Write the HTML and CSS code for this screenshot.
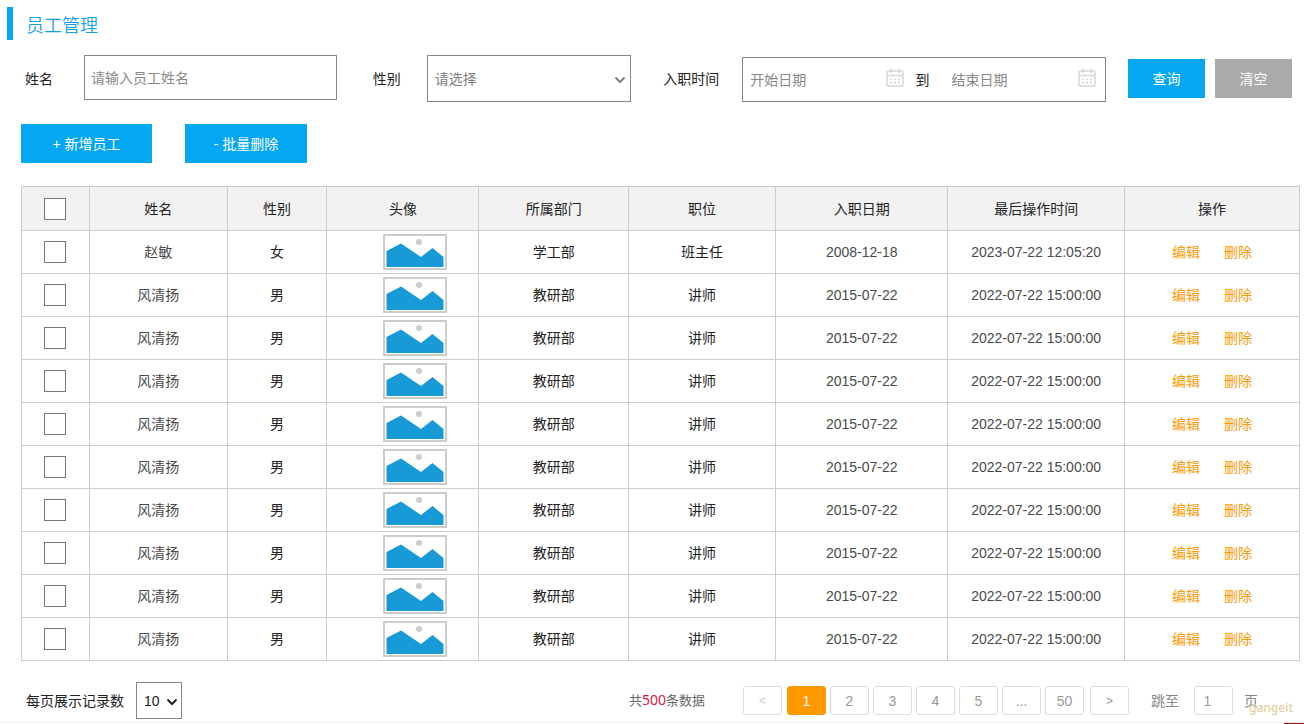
FILE: index.html
```
<!DOCTYPE html>
<html lang="zh-CN">
<head>
<meta charset="utf-8">
<meta name="viewport" content="width=device-width, initial-scale=1">
<title>员工管理</title>
<link rel="stylesheet" href="styles.css">
</head>
<body>
<svg class="sprite" aria-hidden="true">
  <symbol id="photo" viewBox="0 0 64 36">
    <rect x="1" y="1" width="62" height="34" fill="#fff" stroke="#ccc" stroke-width="2"/>
    <circle cx="36" cy="8" r="3" fill="#ccc"/>
    <path d="M3.500 17L18 9.500L38 23L49.500 14L60.500 23V33H3.500Z" fill="#189ad6"/>
  </symbol>
  <symbol id="calendar" viewBox="0 0 18 19">
    <rect x="1" y="3" width="16" height="15" rx="1" fill="none" stroke="#d3d6da" stroke-width="1.500"/>
    <path d="M1 7.500H17M5 0.500V5M13 0.500V5" fill="none" stroke="#d3d6da" stroke-width="1.500"/>
    <path d="M4 11.500H6M8 11.500H10M12 11.500H14M4 14.500H6M8 14.500H10M12 14.500H14" stroke="#d3d6da" stroke-width="1.500"/>
  </symbol>
  <symbol id="chevron" viewBox="0 0 12 8">
    <path d="M1.500 1.500L6 6L10.500 1.500" fill="none" stroke="currentColor" stroke-width="2"/>
  </symbol>
</svg>

<h1 class="page-title">员工管理</h1>

<form class="filters">
  <label class="filter-label" for="name">姓名</label>
  <input class="box name-input" id="name" type="text" placeholder="请输入员工姓名">
  <label class="filter-label" for="gender">性别</label>
  <span class="select-wrap gender-wrap">
    <select class="box" id="gender"><option>请选择</option><option>男</option><option>女</option></select>
    <svg class="chevron"><use href="#chevron"/></svg>
  </span>
  <label class="filter-label" for="start">入职时间</label>
  <div class="box date-range">
    <input class="date-input" id="start" type="text" placeholder="开始日期">
    <svg class="calendar"><use href="#calendar"/></svg>
    <label class="date-to" for="end">到</label>
    <input class="date-input" id="end" type="text" placeholder="结束日期">
    <svg class="calendar"><use href="#calendar"/></svg>
  </div>
  <div class="filter-buttons">
    <button class="btn btn-small" type="button">查询</button>
    <button class="btn btn-small btn-grey" type="button">清空</button>
  </div>
</form>

<div class="actions">
  <button class="btn btn-add" type="button">+ 新增员工</button>
  <button class="btn btn-delete" type="button">- 批量删除</button>
</div>

<div class="table-wrap">
<table class="staff">
  <colgroup>
    <col class="c-check"><col class="c-name"><col class="c-gender"><col class="c-photo"><col class="c-dept"><col class="c-job"><col class="c-date"><col class="c-time"><col class="c-ops">
  </colgroup>
  <thead>
    <tr><th><input class="check" type="checkbox" aria-label="全选"></th><th>姓名</th><th>性别</th><th>头像</th><th>所属部门</th><th>职位</th><th>入职日期</th><th>最后操作时间</th><th>操作</th></tr>
  </thead>
  <tbody>
    <tr><td><input class="check" type="checkbox" aria-label="选择"></td><td class="soft">赵敏</td><td>女</td><td class="photo-cell"><svg class="photo"><use href="#photo"/></svg></td><td>学工部</td><td>班主任</td><td class="soft">2008-12-18</td><td class="soft">2023-07-22 12:05:20</td><td><a class="op" href="#">编辑</a><a class="op" href="#">删除</a></td></tr>
    <tr><td><input class="check" type="checkbox" aria-label="选择"></td><td class="soft">风清扬</td><td>男</td><td class="photo-cell"><svg class="photo"><use href="#photo"/></svg></td><td>教研部</td><td>讲师</td><td class="soft">2015-07-22</td><td class="soft">2022-07-22 15:00:00</td><td><a class="op" href="#">编辑</a><a class="op" href="#">删除</a></td></tr>
    <tr><td><input class="check" type="checkbox" aria-label="选择"></td><td class="soft">风清扬</td><td>男</td><td class="photo-cell"><svg class="photo"><use href="#photo"/></svg></td><td>教研部</td><td>讲师</td><td class="soft">2015-07-22</td><td class="soft">2022-07-22 15:00:00</td><td><a class="op" href="#">编辑</a><a class="op" href="#">删除</a></td></tr>
    <tr><td><input class="check" type="checkbox" aria-label="选择"></td><td class="soft">风清扬</td><td>男</td><td class="photo-cell"><svg class="photo"><use href="#photo"/></svg></td><td>教研部</td><td>讲师</td><td class="soft">2015-07-22</td><td class="soft">2022-07-22 15:00:00</td><td><a class="op" href="#">编辑</a><a class="op" href="#">删除</a></td></tr>
    <tr><td><input class="check" type="checkbox" aria-label="选择"></td><td class="soft">风清扬</td><td>男</td><td class="photo-cell"><svg class="photo"><use href="#photo"/></svg></td><td>教研部</td><td>讲师</td><td class="soft">2015-07-22</td><td class="soft">2022-07-22 15:00:00</td><td><a class="op" href="#">编辑</a><a class="op" href="#">删除</a></td></tr>
    <tr><td><input class="check" type="checkbox" aria-label="选择"></td><td class="soft">风清扬</td><td>男</td><td class="photo-cell"><svg class="photo"><use href="#photo"/></svg></td><td>教研部</td><td>讲师</td><td class="soft">2015-07-22</td><td class="soft">2022-07-22 15:00:00</td><td><a class="op" href="#">编辑</a><a class="op" href="#">删除</a></td></tr>
    <tr><td><input class="check" type="checkbox" aria-label="选择"></td><td class="soft">风清扬</td><td>男</td><td class="photo-cell"><svg class="photo"><use href="#photo"/></svg></td><td>教研部</td><td>讲师</td><td class="soft">2015-07-22</td><td class="soft">2022-07-22 15:00:00</td><td><a class="op" href="#">编辑</a><a class="op" href="#">删除</a></td></tr>
    <tr><td><input class="check" type="checkbox" aria-label="选择"></td><td class="soft">风清扬</td><td>男</td><td class="photo-cell"><svg class="photo"><use href="#photo"/></svg></td><td>教研部</td><td>讲师</td><td class="soft">2015-07-22</td><td class="soft">2022-07-22 15:00:00</td><td><a class="op" href="#">编辑</a><a class="op" href="#">删除</a></td></tr>
    <tr><td><input class="check" type="checkbox" aria-label="选择"></td><td class="soft">风清扬</td><td>男</td><td class="photo-cell"><svg class="photo"><use href="#photo"/></svg></td><td>教研部</td><td>讲师</td><td class="soft">2015-07-22</td><td class="soft">2022-07-22 15:00:00</td><td><a class="op" href="#">编辑</a><a class="op" href="#">删除</a></td></tr>
    <tr><td><input class="check" type="checkbox" aria-label="选择"></td><td class="soft">风清扬</td><td>男</td><td class="photo-cell"><svg class="photo"><use href="#photo"/></svg></td><td>教研部</td><td>讲师</td><td class="soft">2015-07-22</td><td class="soft">2022-07-22 15:00:00</td><td><a class="op" href="#">编辑</a><a class="op" href="#">删除</a></td></tr>
  </tbody>
</table>
</div>

<footer class="footer">
  <label for="size">每页展示记录数</label>
  <span class="select-wrap size-wrap">
    <select class="box" id="size"><option>10</option><option>20</option><option>50</option></select>
    <svg class="chevron"><use href="#chevron"/></svg>
  </span>
  <p class="total">共<span class="total-count">500</span>条数据</p>
  <nav class="pager" aria-label="分页">
    <button class="page page-prev" type="button">&lt;</button>
    <button class="page page-current" type="button">1</button>
    <button class="page" type="button">2</button>
    <button class="page" type="button">3</button>
    <button class="page" type="button">4</button>
    <button class="page" type="button">5</button>
    <button class="page" type="button">...</button>
    <button class="page" type="button">50</button>
    <button class="page page-next" type="button">&gt;</button>
  </nav>
  <label class="jump">跳至<input class="page jump-input" type="text" value="1">页</label>
  <span class="watermark">gangeit</span>
</footer>
<div class="base-line"></div>
</body>
</html>
```

FILE: styles.css
```
* {
  box-sizing: border-box;
}

body {
  margin: 0;
  padding: 7px 4px 0 7px;
  background: #fff;
  color: #222;
  font: 400 14px/20px "Liberation Sans", "Noto Sans CJK SC", sans-serif;
}

input,
select,
button {
  margin: 0;
  font: inherit;
  color: inherit;
}

.sprite {
  position: absolute;
  width: 0;
  height: 0;
}

.page-title {
  margin: 0 0 15px;
  padding: 5px 0 0 13px;
  border-left: 6px solid #04a7f1;
  color: #169fe6;
  font-size: 18px;
  font-weight: 350;
  line-height: 28px;
}

/* Search form */

.filters {
  display: flex;
  align-items: center;
  padding: 0 8px 0 18px;
}

.filter-label {
  flex: none;
}

.box {
  border: 1px solid #888;
  border-radius: 0;
  background: #fff;
}

.name-input {
  flex: 1 1 252px;
  align-self: flex-start;
  min-width: 0;
  height: 45px;
  margin: 0 36px 0 31px;
  padding: 0 6px;
}

input::placeholder {
  color: #888;
  opacity: 1;
}

.select-wrap {
  position: relative;
  display: block;
}

.select-wrap select {
  display: block;
  width: 100%;
  appearance: none;
}

.chevron {
  position: absolute;
  top: 50%;
  width: 12px;
  height: 8px;
  margin-top: -3px;
  pointer-events: none;
}

.gender-wrap {
  flex: 1 1 204px;
  margin: 0 32px 0 26px;
  color: #808080;
}

.gender-wrap select {
  height: 47px;
  padding: 0 7px;
}

.gender-wrap .chevron {
  right: 5px;
}

.date-range {
  flex: 1 1 363px;
  align-self: flex-end;
  display: flex;
  align-items: center;
  min-width: 0;
  height: 45px;
  margin: 0 22px 0 23px;
  padding: 0 9px 0 7px;
}

.date-input {
  flex: 1 1 0;
  width: 0;
  min-width: 0;
  padding: 0;
  border: 0;
  outline: 0;
  background: none;
}

#start {
  flex-grow: 1.07;
}

.calendar {
  flex: none;
  width: 18px;
  height: 19px;
  margin-bottom: 4px;
}

.date-to {
  flex: none;
  margin: 0 22px 0 12px;
}

.filter-buttons {
  flex: none;
  display: flex;
  gap: 10px;
}

.btn {
  height: 39px;
  padding: 0;
  border: 0;
  background: #04a7f1;
  color: #fff;
}

.btn-small {
  width: 77px;
}

.btn-grey {
  background: #aaa;
}

.actions {
  display: flex;
  gap: 33px;
  margin: 22px 0 23px 14px;
}

.btn-add {
  width: 131px;
}

.btn-delete {
  width: 122px;
}

/* Staff table */

.table-wrap {
  padding-left: 14px;
}

.staff {
  width: 100%;
  border-collapse: collapse;
  table-layout: fixed;
}

.c-check { width: 5.3%; }
.c-name { width: 10.8%; }
.c-gender { width: 7.8%; }
.c-photo { width: 11.9%; }
.c-dept { width: 11.7%; }
.c-job { width: 11.5%; }
.c-date { width: 13.5%; }
.c-time { width: 13.8%; }
.c-ops { width: 13.7%; }

.staff th,
.staff td {
  height: 43px;
  padding: 0;
  border: 1px solid #ccc;
  font-weight: 400;
  text-align: center;
  vertical-align: middle;
}

.staff th {
  height: 44px;
  background: #f2f2f2;
}

.staff .soft {
  color: #4a4a4a;
}

.check {
  display: block;
  width: 22px;
  height: 22px;
  margin: 0 auto;
  border: 1px solid #777;
  background: #fff;
  appearance: none;
}

.check:checked {
  background: #04a7f1;
}

.staff .photo-cell {
  padding-left: 24px;
}

.photo {
  display: block;
  width: 64px;
  height: 36px;
  margin: 0 auto;
}

.op {
  margin: 0 12px;
  color: #ff9900;
  text-decoration: none;
}

/* Paging */

.footer {
  position: relative;
  display: flex;
  align-items: center;
  padding: 21px 42px 3px 19px;
}

.size-wrap {
  width: 46px;
  margin-left: 12px;
}

.size-wrap select {
  height: 37px;
  padding: 0 7px;
}

.size-wrap .chevron {
  right: 4px;
}

.total {
  margin: 0 38px 0 auto;
  color: #666;
  font-size: 13px;
}

.total-count {
  color: #dc143c;
  font-family: "Noto Sans", sans-serif;
  font-size: 14px;
}

.pager {
  display: flex;
  gap: 4px;
}

.page {
  width: 39px;
  height: 29px;
  padding: 0;
  border: 1px solid #ddd;
  border-radius: 3px;
  background: #fff;
  color: #999;
  text-align: center;
}

.page-prev {
  margin-right: 1px;
  color: #ccc;
  font-size: 12px;
}

.page-next {
  margin-left: 2px;
  font-size: 12px;
}

.page-current {
  border-color: #ff9900;
  background: #ff9900;
  color: #fff;
}

.jump {
  display: flex;
  align-items: center;
  margin-left: 22px;
  color: #888;
}

.jump-input {
  margin: 0 11px 0 15px;
  padding-right: 12px;
}

.watermark {
  position: absolute;
  right: 7px;
  bottom: 4px;
  color: #e3d0a0;
  font: 500 12px/20px "Noto Sans", sans-serif;
}

.base-line {
  height: 2px;
  margin: 0 -4px 0 -7px;
  border-top: 1px solid #eee;
  background: linear-gradient(#a01018, #a01018) right / 20px 1px no-repeat;
}
```
